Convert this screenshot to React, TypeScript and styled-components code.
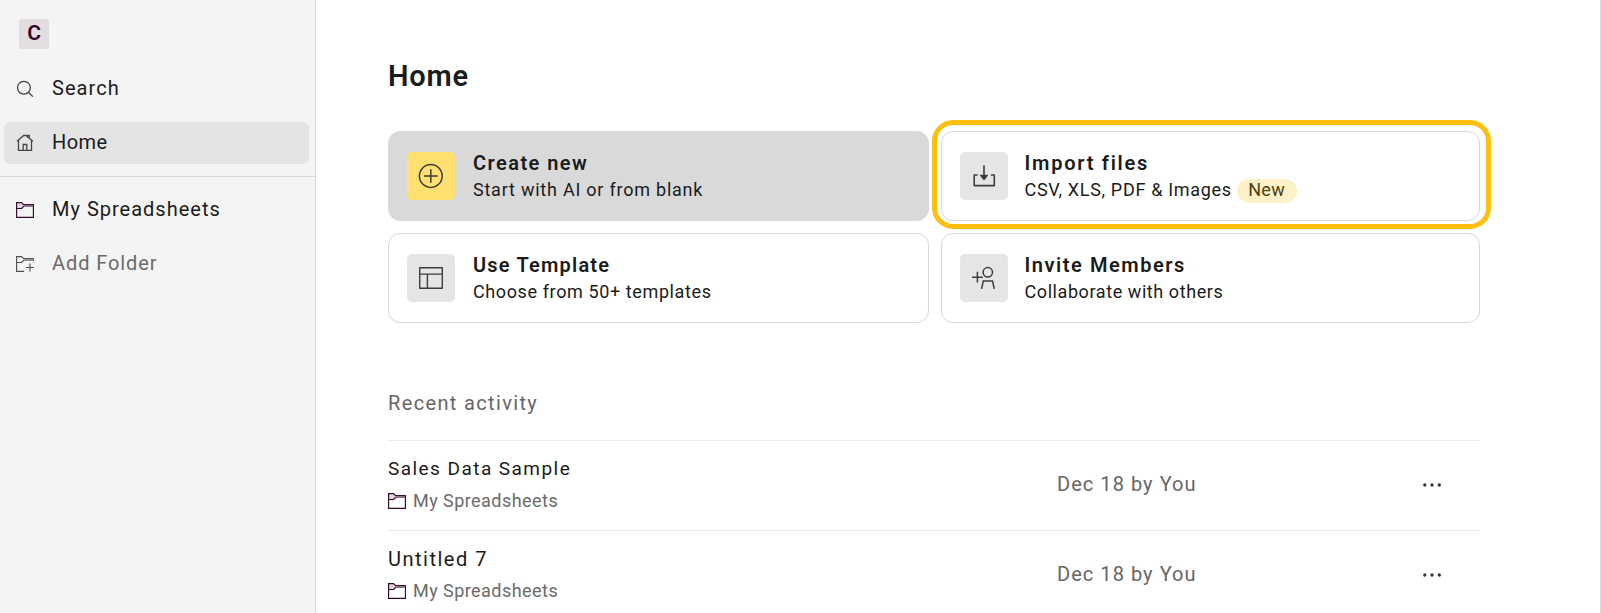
import React from 'react';
import styled, { createGlobalStyle } from 'styled-components';

const GlobalStyle = createGlobalStyle`
  *, *::before, *::after { box-sizing: border-box; }
  body { margin: 0; background: #fff; overflow: hidden; }
`;

const Page = styled.div`
  display: flex;
  width: 100vw;
  height: 100vh;
  overflow: hidden;
  border-right: 1px solid #dadada;
  font-family: Roboto, "Liberation Sans", sans-serif;
  font-size: 20px;
  color: #1b1b1b;
`;

const Sidebar = styled.aside`
  flex: none;
  width: 316px;
  padding-top: 19px;
  background: #f4f4f4;
  border-right: 1px solid #d6d6d6;
`;

const Badge = styled.div`
  display: flex;
  align-items: center;
  justify-content: center;
  width: 30px;
  height: 30px;
  margin: 0 0 19px 19px;
  padding-bottom: 2px;
  border-radius: 3px;
  background: #e3dce0;
  color: #2d0524;
  font-weight: 600;
  font-size: 21px;
`;

const NavList = styled.nav`
  display: flex;
  flex-direction: column;
  gap: 12px;
  padding: 0 6px 12px 4px;
`;

const NavItem = styled.a<{ $active?: boolean; $muted?: boolean }>`
  display: flex;
  align-items: center;
  gap: 18px;
  height: 42px;
  padding-left: 12px;
  border-radius: 6px;
  background: ${p => (p.$active ? '#e4e4e4' : 'transparent')};
  color: ${p => (p.$muted ? '#6b6b6b' : '#1b1b1b')};
  svg { flex: none; }
`;

const Divider = styled.hr`
  height: 1px;
  margin: 0 0 12px;
  border: 0;
  background: #d8d8d8;
`;

const Label = styled.span<{ $track: number }>`
  letter-spacing: ${p => p.$track}px;
  white-space: nowrap;
`;

const NavLabel = styled(Label)`
  line-height: 24px;
  padding-bottom: 2px;
`;

const Main = styled.main`
  width: 1164px;
  padding: 59px 0 0 72px;
`;

const Title = styled.h1`
  margin: 0 0 38px;
  font-size: 29px;
  line-height: 34px;
  font-weight: 600;
  letter-spacing: 0.8px;
`;

const CardGrid = styled.div`
  display: grid;
  grid-template-columns: 541px 539px;
  grid-auto-rows: 90px;
  gap: 12px;
`;

const Card = styled.button<{ $filled?: boolean }>`
  position: relative;
  display: flex;
  align-items: center;
  gap: 18px;
  padding: 0 18px;
  border: 1px solid #d9d9d9;
  border-radius: 12px;
  background: ${p => (p.$filled ? '#d9d9d9' : '#fff')};
  color: inherit;
  font: inherit;
  text-align: left;
`;

const FocusRing = styled.span`
  position: absolute;
  inset: -12.5px -11.5px -9.3px -10.3px;
  border: 5px solid #ffbf0f;
  border-radius: 21px;
  pointer-events: none;
`;

const IconTile = styled.span<{ $accent?: boolean }>`
  display: grid;
  place-items: center;
  flex: none;
  width: 48px;
  height: 48px;
  border-radius: 5px;
  background: ${p => (p.$accent ? '#ffe070' : '#e5e5e5')};
`;

const CardText = styled.span<{ $inset: number }>`
  display: flex;
  flex-direction: column;
  padding-top: 2px;
  margin-left: ${p => p.$inset}px;
`;

const CardTitle = styled(Label)`
  line-height: 26px;
  font-weight: 600;
`;

const CardNote = styled.span`
  display: flex;
  align-items: center;
  height: 28px;
  font-size: 18px;
  line-height: 28px;
`;

const Pill = styled.span`
  display: flex;
  align-items: center;
  justify-content: center;
  width: 60px;
  height: 24px;
  margin: 2px 0 0 5px;
  padding-bottom: 2px;
  border-radius: 12px;
  background: #fef0c7;
  color: #4f410f;
`;

const SectionTitle = styled.h2`
  margin: 68px 0 25px;
  font-size: 20px;
  line-height: 24px;
  font-weight: 400;
  letter-spacing: 1.35px;
  color: #666;
`;

const FileRow = styled.div`
  display: flex;
  height: 90px;
  border-top: 1px solid #ececec;
`;

const FileInfo = styled.div`
  flex: none;
  width: 669px;
  padding-top: 16px;
`;

const FileName = styled.div<{ $size: number; $track: number }>`
  height: 24px;
  font-size: ${p => p.$size}px;
  line-height: 24px;
  letter-spacing: ${p => p.$track}px;
`;

const FileFolder = styled.div`
  display: flex;
  align-items: center;
  gap: 7px;
  height: 24px;
  margin-top: 8px;
  font-size: 18px;
  line-height: 24px;
  color: #6b6b6b;
`;

const FileDate = styled.div`
  flex: 1;
  padding-top: 31px;
  line-height: 24px;
  letter-spacing: 1.05px;
  color: #666;
`;

const MoreButton = styled.button`
  display: flex;
  align-items: center;
  margin-right: 39px;
  padding: 0 0 2px;
  border: 0;
  background: none;
`;

const SearchIcon = () => (
  <svg width="18" height="18" viewBox="0 0 18 18" fill="none" stroke="#3f3f3f" strokeWidth="1.25">
    <circle cx="7.9" cy="7.7" r="6.4" />
    <path d="M12.5 12.3 16.8 16.6" />
  </svg>
);

const HomeIcon = () => (
  <svg width="18" height="18" viewBox="0 0 18 18" fill="none" stroke="#454545" strokeWidth="1.3">
    <path d="M1 7.2 7.7 1.5h2.2l7 5.7M2.5 6.3v10.1h13V6.3M7.2 16.2v-5.7h3.6v5.7M11.4 2.7V1.5h1.9v2.7" />
  </svg>
);

const FolderIcon = () => (
  <svg width="18" height="16" viewBox="0 0 18 16" fill="none" stroke="#32092b" strokeWidth="1.15">
    <path d="M.5.5H6L8 2.5V4.5L6 6.5H.5Z" fill="#e0d4dd" stroke="none" />
    <path d="M.6.6H5.6L7.5 2.6H17.4V15.4H.6ZM.6 6.5H5.6L7.5 4.5H17.4" />
    <path d="M8 2.9h9v2.1H8Z" fill="#8e6d87" stroke="none" />
  </svg>
);

const AddFolderIcon = () => (
  <svg width="18" height="16" viewBox="0 0 18 16" fill="none" stroke="#505050" strokeWidth="1.15">
    <path d="M8 15.4H.6V.6H5.6L7.5 2.6H17.4V4.5M.6 6.5H5.6L7.5 4.5H17.4M14 7.5v8M10 11.5h8" />
    <path d="M8 2.9h9v1.9H8Z" fill="#999" stroke="none" />
  </svg>
);

const PlusCircleIcon = () => (
  <svg width="26" height="26" viewBox="0 0 26 26" fill="none" stroke="#3d3d32" strokeWidth="1.5">
    <circle cx="12.8" cy="13" r="11.4" />
    <path d="M12.8 6.2v13.6M6 13h13.6" />
  </svg>
);

const TemplateIcon = () => (
  <svg width="24" height="24" viewBox="0 0 24 24" fill="none" stroke="#3d3d3d" strokeWidth="1.4">
    <path d="M.7 1.8h22.6v20.4H.7ZM.7 8.1h22.6M8.4 8.1v14.1" strokeLinejoin="round" />
  </svg>
);

const ImportIcon = () => (
  <svg width="24" height="24" viewBox="0 0 24 24" fill="none" stroke="#3d3d3d" strokeWidth="1.6" strokeLinejoin="round">
    <path d="M5.6 11H2.2v10.6h20.1V11h-3.4M12 1.2v12" />
    <path d="M7.6 10.8h8.8l-2.8 4L12 16.6l-1.6-1.8Z" fill="#3d3d3d" stroke="none" />
  </svg>
);

const InviteIcon = () => (
  <svg width="24" height="24" viewBox="0 0 24 24" fill="none" stroke="#3d3d3d" strokeWidth="1.5">
    <circle cx="15.8" cy="6.3" r="4.7" />
    <path d="M9.6 22.8 11.3 15.1h9.2l1.8 7.7M5.4 5.8v10.8M0 11.2h10.8" />
  </svg>
);

const DotsIcon = () => (
  <svg width="18" height="4" viewBox="0 0 18 4" fill="#333">
    <circle cx="1.8" cy="2" r="1.65" />
    <circle cx="9" cy="2" r="1.65" />
    <circle cx="16.3" cy="2" r="1.65" />
  </svg>
);

const files = [
  { name: 'Sales Data Sample', size: 19, track: 1.45 },
  { name: 'Untitled 7', size: 20, track: 1.5 },
];

export default function App() {
  return (
    <>
      <GlobalStyle />
      <Page>
        <Sidebar>
          <Badge>C</Badge>
          <NavList>
            <NavItem><SearchIcon /><NavLabel $track={1.05}>Search</NavLabel></NavItem>
            <NavItem $active><HomeIcon /><NavLabel $track={0.45}>Home</NavLabel></NavItem>
          </NavList>
          <Divider />
          <NavList>
            <NavItem><FolderIcon /><NavLabel $track={1}>My Spreadsheets</NavLabel></NavItem>
            <NavItem $muted><AddFolderIcon /><NavLabel $track={0.9}>Add Folder</NavLabel></NavItem>
          </NavList>
        </Sidebar>
        <Main>
          <Title>Home</Title>
          <CardGrid>
            <Card $filled>
              <IconTile $accent><PlusCircleIcon /></IconTile>
              <CardText $inset={0}>
                <CardTitle $track={1.45}>Create new</CardTitle>
                <CardNote><Label $track={0.77}>Start with AI or from blank</Label></CardNote>
              </CardText>
            </Card>
            <Card>
              <IconTile><ImportIcon /></IconTile>
              <CardText $inset={-1.5}>
                <CardTitle $track={1.75}>Import files</CardTitle>
                <CardNote>
                  <Label $track={0.68}>CSV, XLS, PDF &amp; Images</Label>
                  <Pill><Label $track={0.4}>New</Label></Pill>
                </CardNote>
              </CardText>
              <FocusRing />
            </Card>
            <Card>
              <IconTile><TemplateIcon /></IconTile>
              <CardText $inset={0}>
                <CardTitle $track={1.2}>Use Template</CardTitle>
                <CardNote><Label $track={0.61}>Choose from 50+ templates</Label></CardNote>
              </CardText>
            </Card>
            <Card>
              <IconTile><InviteIcon /></IconTile>
              <CardText $inset={-1.5}>
                <CardTitle $track={1.55}>Invite Members</CardTitle>
                <CardNote><Label $track={0.58}>Collaborate with others</Label></CardNote>
              </CardText>
            </Card>
          </CardGrid>
          <SectionTitle>Recent activity</SectionTitle>
          {files.map(f => (
            <FileRow key={f.name}>
              <FileInfo>
                <FileName $size={f.size} $track={f.track}>{f.name}</FileName>
                <FileFolder><FolderIcon /><Label $track={0.45}>My Spreadsheets</Label></FileFolder>
              </FileInfo>
              <FileDate>Dec 18 by You</FileDate>
              <MoreButton aria-label="More"><DotsIcon /></MoreButton>
            </FileRow>
          ))}
        </Main>
      </Page>
    </>
  );
}
